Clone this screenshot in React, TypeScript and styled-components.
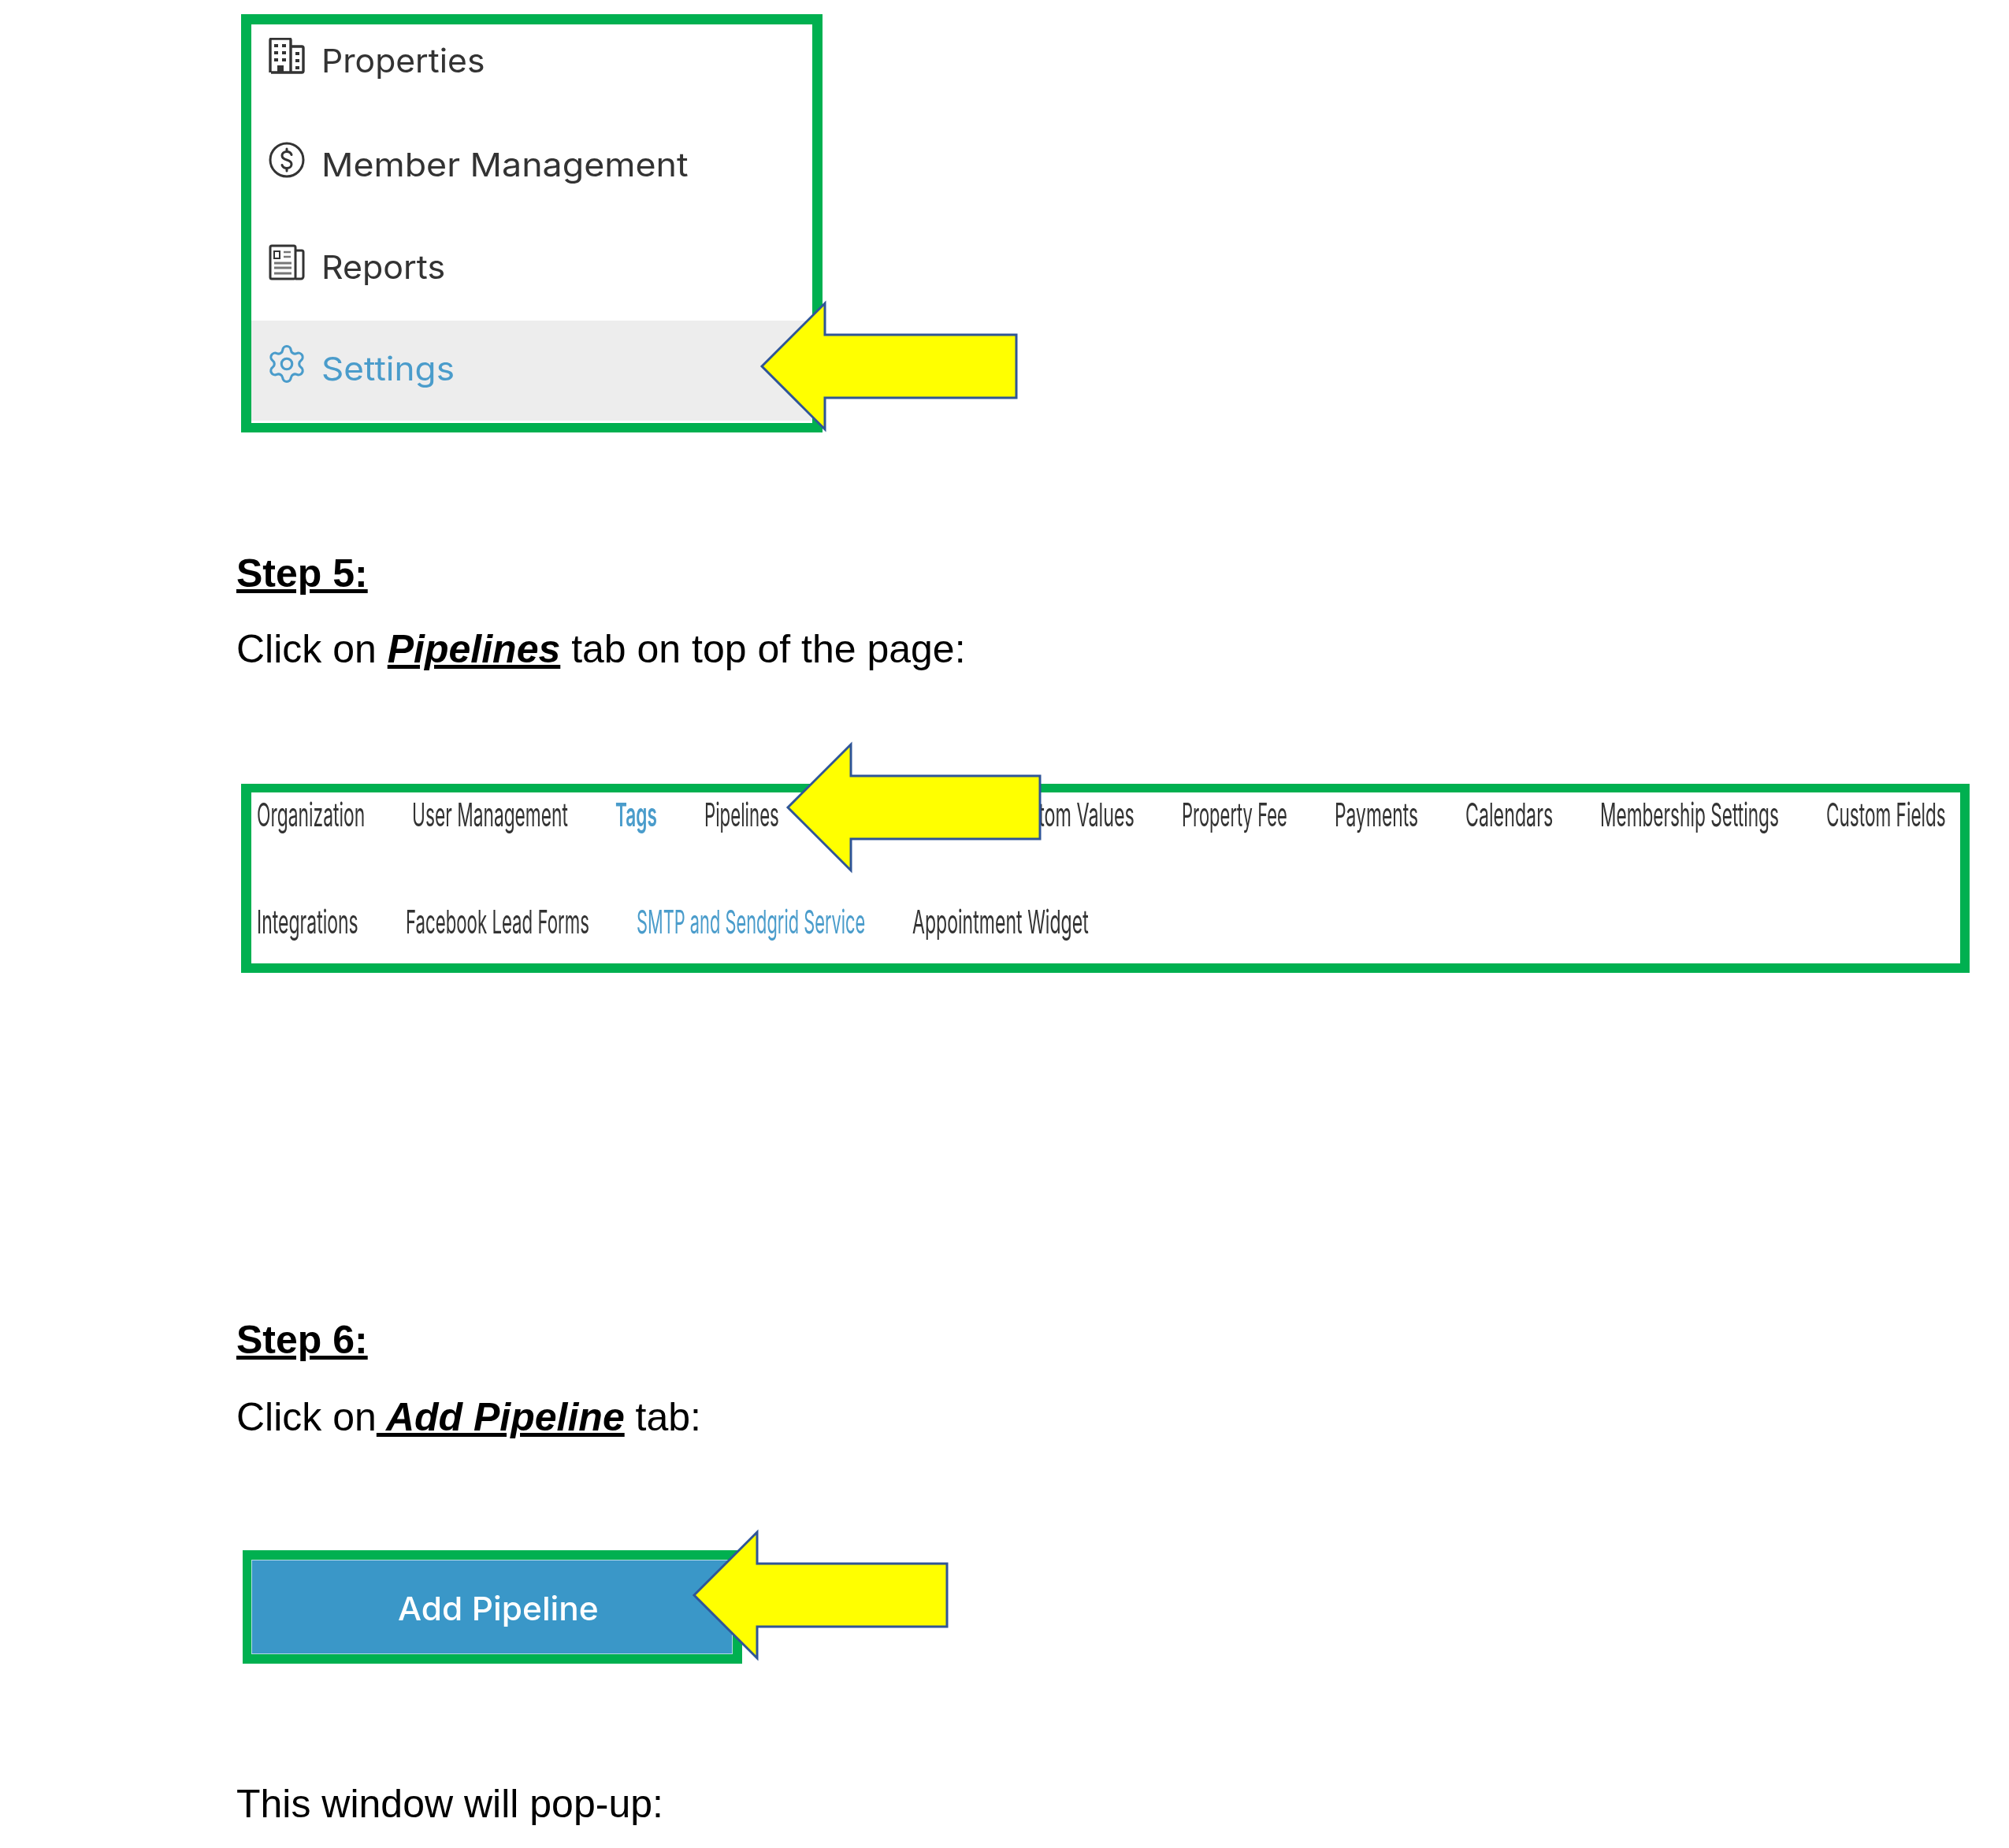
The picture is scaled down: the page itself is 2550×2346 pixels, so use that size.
import React, { useLayoutEffect, useRef, useState } from "react";
import styled, { createGlobalStyle } from "styled-components";
import { Settings as Gear } from "lucide-react";

const Global = createGlobalStyle`
  html, body { margin: 0; padding: 0; background: #fff; }
  body { font-family: "Liberation Sans", Arial, sans-serif; color: #000; }
`;

const Page = styled.div`
  width: 2550px;
  height: 2346px;
  padding-top: 18px;
  box-sizing: border-box;
  overflow: hidden;
`;

const Frame = styled.div<{ $x: number; $w: number; $h: number; $mt?: number; $b: string }>`
  position: relative;
  box-sizing: border-box;
  margin-left: ${(p) => p.$x}px;
  margin-top: ${(p) => p.$mt ?? 0}px;
  width: ${(p) => p.$w}px;
  height: ${(p) => p.$h}px;
  border-style: solid;
  border-color: #00b050;
  border-width: ${(p) => p.$b};
  background: #fff;
`;

const Menu = styled.div`
  display: flex;
  flex-direction: column;
`;

const MenuRow = styled.div<{ $h: number; $pad: number; $active?: boolean }>`
  display: flex;
  align-items: flex-start;
  gap: 21px;
  height: ${(p) => p.$h}px;
  padding: ${(p) => p.$pad}px 0 0 22px;
  box-sizing: border-box;
  background: ${(p) => (p.$active ? "#ededed" : "#fff")};
  color: ${(p) => (p.$active ? "#4a9ccb" : "#333")};
`;

const MenuIcon = styled.div`
  flex: 0 0 46px;
  width: 46px;
  height: 46px;
  display: flex;
  align-items: center;
  justify-content: center;
  svg { display: block; flex: none; }
`;

const MenuLabel = styled.div`
  font: 400 41px/50px Inter, "Open Sans", sans-serif;
  margin-top: 4px;
`;

const FitBox = styled.div<{ $w: number }>`
  flex: 0 0 ${(p) => p.$w}px;
  width: ${(p) => p.$w}px;
`;

const FitSpan = styled.span`
  display: inline-block;
  white-space: nowrap;
  transform-origin: left center;
  filter: blur(0.4px);
`;

function Fit({ w, children }: { w: number; children: React.ReactNode }) {
  const ref = useRef<HTMLSpanElement>(null);
  const [scale, setScale] = useState(1);
  useLayoutEffect(() => {
    if (ref.current) setScale(w / ref.current.offsetWidth);
  }, [w]);
  return (
    <FitBox $w={w}>
      <FitSpan ref={ref} style={{ transform: `scaleX(${scale})` }}>
        {children}
      </FitSpan>
    </FitBox>
  );
}

const TabRows = styled.div`
  display: flex;
  flex-direction: column;
  padding-left: 7px;
`;

const TabRow = styled.div<{ $mt: number }>`
  display: flex;
  gap: 60px;
  margin-top: ${(p) => p.$mt}px;
`;

const TabSlot = styled.div`
  flex: 0 0 166px;
`;

const Tab = styled.div<{ $blue?: boolean; $bold?: boolean }>`
  display: flex;
  font: ${(p) => (p.$bold ? 600 : 400)} 41px/50px Inter, "Open Sans", sans-serif;
  color: ${(p) => (p.$blue ? "#4a9ccb" : "#333")};
`;

const Heading = styled.div<{ $mt: number }>`
  margin: ${(p) => p.$mt}px 0 0 300px;
  font-size: 50px;
  line-height: 60px;
  font-weight: 700;
  text-decoration: underline;
`;

const Para = styled.div<{ $mt: number }>`
  margin: ${(p) => p.$mt}px 0 0 300px;
  font-size: 50px;
  line-height: 60px;
  white-space: pre;
`;

const Emph = styled.span`
  font-weight: 700;
  font-style: italic;
  text-decoration: underline;
`;

const AddButton = styled.div`
  box-sizing: border-box;
  width: 611px;
  height: 120px;
  background: #3a97c8;
  border: 1px solid #b5dbe6;
  color: #fff;
  display: flex;
  align-items: center;
  padding: 3px 0 0 185px;
  font: 500 41px/50px Inter, "Open Sans", sans-serif;
`;

const ArrowWrap = styled.svg<{ $left: number; $top: number }>`
  position: absolute;
  left: ${(p) => p.$left}px;
  top: ${(p) => p.$top}px;
  overflow: visible;
`;

function Arrow({ left, top, w }: { left: number; top: number; w: number }) {
  return (
    <ArrowWrap $left={left} $top={top} width={w} height={160} viewBox={`0 0 ${w} 160`}>
      <polygon
        points={`0,80 80,0 80,40 ${w},40 ${w},120 80,120 80,160`}
        fill="#ffff00"
        stroke="#2f5597"
        strokeWidth={3}
      />
    </ArrowWrap>
  );
}

const BuildingIcon = () => (
  <svg width="46" height="46" viewBox="0 0 46 46" fill="none" stroke="#333" strokeWidth="3.4">
    <path d="M2 44V3a2 2 0 0 1 2-2h22a2 2 0 0 1 2 2v41" />
    <path d="M28 11h14a2 2 0 0 1 2 2v29a2 2 0 0 1-2 2H3" />
    <g fill="#333" stroke="none">
      <rect x="7" y="8" width="5" height="4" />
      <rect x="17" y="8" width="5" height="4" />
      <rect x="7" y="17" width="5" height="4" />
      <rect x="17" y="17" width="5" height="4" />
      <rect x="7" y="26" width="5" height="4" />
      <rect x="17" y="26" width="5" height="4" />
      <rect x="11" y="35" width="8" height="9" />
      <rect x="34" y="18" width="5" height="4" />
      <rect x="34" y="27" width="5" height="4" />
      <rect x="34" y="36" width="5" height="4" />
    </g>
  </svg>
);

const DollarIcon = () => (
  <svg width="46" height="46" viewBox="0 0 46 46" fill="none" stroke="#333" strokeWidth="3" strokeLinecap="round">
    <circle cx="23" cy="23" r="21" />
    <path d="M29 16.500c-.8-2.600-3-4-6-4-3.600 0-6 2-6 5 0 3.200 2.700 4.500 6 5.500s6 2.300 6 5.500c0 3-2.400 5-6 5-3 0-5.200-1.400-6-4" />
    <path d="M23 9v3.500M23 33.500V37" />
  </svg>
);

const ReportIcon = () => (
  <svg width="46" height="46" viewBox="0 0 46 46" fill="none" stroke="#333" strokeWidth="3">
    <rect x="2" y="2" width="32" height="42" rx="2" />
    <path d="M34 8h8a2 2 0 0 1 2 2v31a3 3 0 0 1-3 3h-7" />
    <rect x="7" y="9" width="7" height="9" strokeWidth="2" />
    <path d="M19 10h9M19 16h9" strokeWidth="2.500" stroke="#777" />
    <path d="M7 24h22M7 30h22M7 37h22" strokeWidth="3" stroke="#777" />
  </svg>
);

const App = () => (
  <Page>
    <Global />
    <Frame $x={306} $w={738} $h={531} $b="13px 13px 12px 13px">
      <Menu>
        <MenuRow $h={117} $pad={17}>
          <MenuIcon><BuildingIcon /></MenuIcon>
          <MenuLabel><Fit w={208}>Properties</Fit></MenuLabel>
        </MenuRow>
        <MenuRow $h={130} $pad={32}>
          <MenuIcon><DollarIcon /></MenuIcon>
          <MenuLabel><Fit w={466}>Member Management</Fit></MenuLabel>
        </MenuRow>
        <MenuRow $h={129} $pad={32}>
          <MenuIcon><ReportIcon /></MenuIcon>
          <MenuLabel><Fit w={157}>Reports</Fit></MenuLabel>
        </MenuRow>
        <MenuRow $h={127} $pad={32} $active>
          <MenuIcon><Gear size={54} strokeWidth={1.4} color="#4a9ccb" /></MenuIcon>
          <MenuLabel><Fit w={169}>Settings</Fit></MenuLabel>
        </MenuRow>
      </Menu>
      <Arrow left={648} top={354} w={323} />
    </Frame>

    <Heading $mt={149}>Step 5:</Heading>
    <Para $mt={36}>Click on <Emph>Pipelines</Emph> tab on top of the page:</Para>

    <Frame $x={306} $w={2194} $h={240} $mt={141} $b="11px 12px 12px 13px">
      <TabRows>
        <TabRow $mt={3}>
          <Tab><Fit w={137}>Organization</Fit></Tab>
          <Tab><Fit w={198}>User Management</Fit></Tab>
          <Tab $blue $bold><Fit w={53}>Tags</Fit></Tab>
          <Tab><Fit w={95}>Pipelines</Fit></Tab>
          <TabSlot />
          <Tab><Fit w={165}>Custom Values</Fit></Tab>
          <Tab><Fit w={134}>Property Fee</Fit></Tab>
          <Tab><Fit w={106}>Payments</Fit></Tab>
          <Tab><Fit w={111}>Calendars</Fit></Tab>
          <Tab><Fit w={227}>Membership Settings</Fit></Tab>
          <Tab><Fit w={152}>Custom Fields</Fit></Tab>
        </TabRow>
        <TabRow $mt={86}>
          <Tab><Fit w={129}>Integrations</Fit></Tab>
          <Tab><Fit w={233}>Facebook Lead Forms</Fit></Tab>
          <Tab $blue><Fit w={290}>SMTP and Sendgrid Service</Fit></Tab>
          <Tab><Fit w={224}>Appointment Widget</Fit></Tab>
        </TabRow>
      </TabRows>
      <Arrow left={681} top={-61} w={320} />
    </Frame>

    <Heading $mt={436}>Step 6:</Heading>
    <Para $mt={38}>Click on<Emph> Add Pipeline</Emph> tab:</Para>

    <Frame $x={308} $w={634} $h={144} $mt={139} $b="12px 13px 12px 11px">
      <AddButton><Fit w={255}>Add Pipeline</Fit></AddButton>
      <Arrow left={562} top={-35} w={321} />
    </Frame>

    <Para $mt={148}>This window will pop-up:</Para>
  </Page>
);

export default App;
